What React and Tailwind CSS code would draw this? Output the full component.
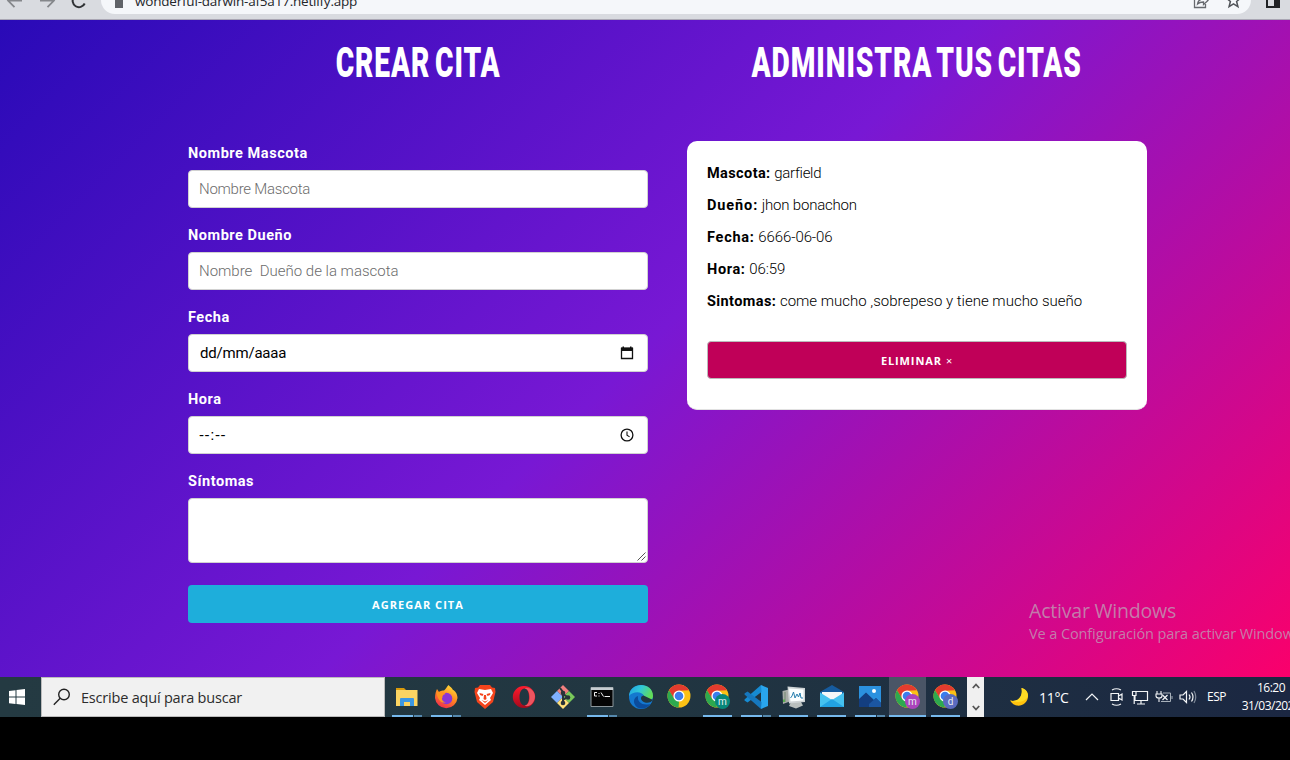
import React from 'react';

const BODY = "font-['Roboto','Liberation_Sans',sans-serif]";

function BrowserBar() {
  return (
    <header className="flex h-5 shrink-0 items-end overflow-hidden border-b border-[#a9a6b4] bg-[#d9dbe0]">
      <div className="mb-[5px] flex h-7 w-full shrink-0 items-center">
        <svg width="101" height="28" viewBox="0 0 101 28" fill="none" className="shrink-0">
          <g stroke="#85878b" strokeWidth="1.8">
            <path d="M8 14.600H22M14.500 8L8 14.600L14.500 21.200" />
            <path d="M40 14.600H54M47.500 8L54 14.600L47.500 21.200" />
          </g>
          <path d="M84.700 17.500A6.300 6.300 0 1 1 83.500 10.500" stroke="#303235" strokeWidth="2" />
        </svg>
        <div className="flex h-7 w-[1150px] items-center rounded-full bg-[#f5f7fa] pl-3.5 pr-[9px]">
          <div className="mt-1 h-3 w-2 bg-[#606368]" />
          <span className="ml-3 mt-0.5 flex-1 whitespace-nowrap font-['Open_Sans',sans-serif] text-[13.500px] leading-5 tracking-[-0.2px] text-[#24262a]">
            wonderful-darwin-af5a17.netlify.app
          </span>
          <svg width="16" height="18" viewBox="0 0 16 18" fill="none" stroke="#66696e" strokeWidth="1.300" className="mr-4">
            <path d="M5 4H1.500V16.500H12.500V13M4.500 13C5 9 8 8 10.500 8V5L15 9.500L10.500 13.500V11C8 11 6 11.500 4.500 13Z" />
          </svg>
          <svg width="17" height="18" viewBox="0 0 17 18" fill="none" stroke="#505358" strokeWidth="1.500">
            <path d="M8.500 2L10.400 6.800L15.500 7.200L11.600 10.500L12.900 15.600L8.500 12.900L4.100 15.600L5.400 10.500L1.500 7.200L6.600 6.800Z" />
          </svg>
        </div>
        <svg width="16" height="28" viewBox="0 0 16 28" className="ml-[14px] shrink-0">
          <path d="M2 9H14V21H2Z" fill="none" stroke="#202124" strokeWidth="2" />
          <path d="M9 8H15V22H9Z" fill="#202124" />
        </svg>
      </div>
    </header>
  );
}

function Title({ children }) {
  return (
    <h1 className="flex h-[84px] items-center justify-center pt-0.5">
      <span className="scale-x-[0.67] whitespace-nowrap font-['Roboto',sans-serif] text-[42px] font-black leading-none tracking-[1.4px] [word-spacing:-5px] text-white">
        {children}
      </span>
    </h1>
  );
}

const box = 'flex h-[38px] w-full items-center rounded-[4px] border border-[#d1d1d1] bg-white px-2.5 text-[15px]';

function Field({ label, children }) {
  return (
    <div>
      <div className="mb-1 h-6 text-[14.500px] font-bold leading-6 tracking-[0.55px] text-white">{label}</div>
      {children}
    </div>
  );
}

function CreateForm() {
  return (
    <section className="w-[460px]">
      <Title>CREAR CITA</Title>
      <div className={'mt-[38px] flex flex-col gap-4 ' + BODY}>
        <Field label="Nombre Mascota">
          <div className={box + ' font-light tracking-[-0.25px] text-[#6c6c6c]'}>Nombre Mascota</div>
        </Field>
        <Field label="Nombre Dueño">
          <div className={box + ' whitespace-pre font-light text-[#6c6c6c]'}>{'Nombre  Dueño de la mascota'}</div>
        </Field>
        <Field label="Fecha">
          <div className={box + ' justify-between text-black'}>
            <span className="pl-px tracking-[-0.2px]">dd/mm/aaaa</span>
            <svg width="14" height="14" viewBox="0 0 14 14" className="mr-[3px]">
              <path d="M1.500 2.500H12.500V12.500H1.500Z" fill="none" stroke="#111" strokeWidth="1.300" />
              <path d="M1 1.500H13V5H1ZM2.500 0.500H4V2H2.500ZM10 0.500H11.500V2H10Z" fill="#111" />
            </svg>
          </div>
        </Field>
        <Field label="Hora">
          <div className={box + ' justify-between text-black'}>
            <span className="font-['Liberation_Sans',sans-serif] tracking-[0.6px]">--:--</span>
            <svg width="14" height="14" viewBox="0 0 14 14" fill="none" stroke="#111" className="mr-[3px]">
              <circle cx="7" cy="7" r="5.900" strokeWidth="1.300" />
              <path d="M7 3.500V7.300L9.600 8.900" strokeWidth="1.100" />
            </svg>
          </div>
        </Field>
        <Field label="Síntomas">
          <div className="flex h-[65px] w-full items-end justify-end rounded-[4px] border border-[#d1d1d1] bg-white">
            <svg width="10" height="10" viewBox="0 0 10 10" stroke="#555" strokeWidth="1">
              <path d="M0.500 8.500L8.500 0.500M4.500 8.500L8.500 4.500" />
            </svg>
          </div>
        </Field>
        <div className="mt-1.5 flex h-[38px] items-center justify-center rounded-[4px] bg-[#1eaedb] pt-0.5 font-['Open_Sans',sans-serif] text-[11px] font-bold tracking-[1.05px] text-white">
          AGREGAR CITA
        </div>
      </div>
    </section>
  );
}

const details = [
  ['Mascota:', 'garfield', 'tracking-[0.4px]', 'tracking-[-0.3px]'],
  ['Dueño:', 'jhon bonachon', 'tracking-[0.9px]', 'tracking-[-0.2px]'],
  ['Fecha:', '6666-06-06', 'tracking-[0.75px]', 'tracking-[-0.1px]'],
  ['Hora:', '06:59', 'tracking-[0.65px]', 'tracking-[-0.1px]'],
  ['Sintomas:', 'come mucho ,sobrepeso y tiene mucho sueño', 'tracking-[0.4px]', 'tracking-[0px]'],
];

function Appointments() {
  return (
    <section className="w-[460px]">
      <Title>ADMINISTRA TUS CITAS</Title>
      <div className={'mt-[37px] h-[269px] rounded-[10px] border-b border-[#e1e1e1] bg-white px-5 pt-4 ' + BODY}>
        {details.map(([k, v, keyTracking, valueTracking]) => (
          <p key={k} className="h-8 whitespace-nowrap text-[15px] font-light leading-8 text-black">
            <span className={'text-[14.500px] font-bold ' + keyTracking}>{k}</span>{' '}
            <span className={valueTracking}>{v}</span>
          </p>
        ))}
        <div className="mt-6 flex h-[38px] items-center justify-center rounded-[4px] border border-[#bbb] bg-[#c00058] pt-0.5 font-['Open_Sans',sans-serif] text-[11px] font-bold tracking-[0.9px] text-white">
          ELIMINAR <span className="ml-1 font-normal">×</span>
        </div>
      </div>
    </section>
  );
}

function Chrome({ badge, letter }) {
  return (
    <svg width="28" height="28" viewBox="0 0 28 28">
      <circle cx="13" cy="13" r="11.500" fill="#fbc116" />
      <path d="M3 7.200A11.500 11.500 0 0 1 23 7.300L13 7.800L8 15.800Z" fill="#e33b2e" />
      <path d="M3 7.200L8.200 15.800L13 18.500L12.600 24.500A11.500 11.500 0 0 1 3 7.200Z" fill="#2da94f" />
      <circle cx="13" cy="13" r="5.600" fill="#fff" />
      <circle cx="13" cy="13" r="4.300" fill="#3b7ded" />
      {letter && <circle cx="18.500" cy="18.500" r="7.500" fill={badge} />}
      {letter && (
        <text x="18.500" y="22" textAnchor="middle" fontSize="10" fontFamily="Roboto, sans-serif" fill="#e8eef0">
          {letter}
        </text>
      )}
    </svg>
  );
}

const svgProps = { width: 26, height: 26, viewBox: '0 0 26 26' };

const Explorer = () => (
  <svg {...svgProps}>
    <path d="M2 4H10L12 6H2Z" fill="#d99a0b" />
    <path d="M2 6H23.500V22H2Z" fill="#fbd462" />
    <path d="M6 22V15Q6 14 7 14H19Q20 14 20 15V22H16V18H10V22Z" fill="#3c97e2" />
  </svg>
);

const Firefox = () => (
  <svg {...svgProps}>
    <defs>
      <linearGradient id="fx" x1="0.8" y1="0" x2="0.300" y2="1">
        <stop offset="0" stopColor="#ffe23b" />
        <stop offset="0.500" stopColor="#ff8a20" />
        <stop offset="1" stopColor="#f0294f" />
      </linearGradient>
    </defs>
    <path d="M15.500 1C17 3 19 3.500 20 6C22 6.500 24.500 10 24.500 14A11.300 11.300 0 0 1 2 14C2 10 3 7 4 5L6 8Q8 6 11 6.500C13 5 13.500 3 15.500 1Z" fill="url(#fx)" />
    <circle cx="13.500" cy="14.500" r="5.800" fill="#8b35d4" />
    <path d="M3.500 8.500C7 7 11 8 12.500 10C10 10.500 9 12 9.500 13.500C8 15 10 18.500 13 18C8 20.500 4.500 15 3.500 8.500Z" fill="#ff9420" />
  </svg>
);

const Brave = () => (
  <svg {...svgProps}>
    <path d="M8 1H18L20 3.500L23 4L23.500 8L21 18L13 25L5 18L2.500 8L3 4L6 3.500Z" fill="#f4441c" />
    <path d="M7 5L13 6L19 5L21 9L18 14L19 16L13 21L7 16L8 14L5 9Z" fill="#fff" />
    <path d="M7.500 9L11.500 10L10.500 12L8 11ZM18.500 9L14.500 10L15.500 12L18 11ZM12 11H14L14.500 15L13 16L11.500 15ZM9.500 16L13 17.500L16.500 16L13 19Z" fill="#f4441c" />
  </svg>
);

const Opera = () => (
  <svg {...svgProps}>
    <defs>
      <linearGradient id="op" x1="0" y1="0" x2="0" y2="1">
        <stop offset="0" stopColor="#ff1b2d" />
        <stop offset="1" stopColor="#a5091c" />
      </linearGradient>
    </defs>
    <path fillRule="evenodd" d="M13 2A11.200 11 0 1 0 13 24A11.200 11 0 1 0 13 2ZM13.500 4.500C16.500 4.500 18 8.500 18 13S16.500 21.500 13.500 21.500S8.500 17.500 8.500 13S10.500 4.500 13.500 4.500Z" fill="url(#op)" />
    <path d="M13.500 4.500C16 2.500 23 5 24 12C24 20 17 24 13.500 21.500C17 21.500 18.500 17 18.500 13S17 4.500 13.500 4.500Z" fill="#ee5560" />
  </svg>
);

const Git = () => (
  <svg {...svgProps}>
    <path d="M13 1L19 7L13 13L7 7Z" fill="#f07f7f" />
    <path d="M7 7L13 13L7 19L1 13Z" fill="#7fb0ff" />
    <path d="M19 7L25 13L19 19L13 13Z" fill="#79c95a" />
    <path d="M13 13L19 19L13 25L7 19Z" fill="#ffe07a" />
    <path d="M10 4L13 8V19M13 10L18 13.500M13 16L17 13" stroke="#29333a" strokeWidth="2" fill="none" />
    <circle cx="13" cy="9" r="2.300" fill="#29333a" />
    <circle cx="18" cy="13.500" r="2.300" fill="#29333a" />
    <circle cx="13" cy="19" r="2.300" fill="#29333a" />
  </svg>
);

const Cmd = () => (
  <svg {...svgProps}>
    <path d="M2 3.500H24V22.500H2Z" fill="#050505" stroke="#8d979c" />
    <path d="M2 3.500H24V6H2Z" fill="#c6cdd1" />
    <path d="M8 8.500H5.500V12H8M10 9V10M10 11.500V12.500M12 8.500L14.500 12.500M15.500 12.500H21" stroke="#f1f1f1" fill="none" />
  </svg>
);

const Edge = () => (
  <svg {...svgProps}>
    <defs>
      <linearGradient id="ed" x1="0" y1="0" x2="1" y2="0.400">
        <stop offset="0" stopColor="#1f9de6" />
        <stop offset="0.500" stopColor="#31c8d6" />
        <stop offset="1" stopColor="#62dc57" />
      </linearGradient>
    </defs>
    <circle cx="13" cy="13" r="12" fill="#1478cf" />
    <path d="M1 12C2 -3 25 -2 25 12C25 16 21 18 17 17C14.500 16 16.500 14.500 16 12C14 7 5 7 1 12Z" fill="url(#ed)" />
    <path d="M10 12C9 18 14 22 22.500 20C18 26 9 26 6.500 20C5 16 7 13 10 12Z" fill="#0b4c9c" />
    <path d="M15.500 11.500C12 12 12 17 17 18.500C20 19.500 24 18 25 15.500C25 18 24 19.500 22.500 21L25 21.500V16Z" fill="#22373f" />
  </svg>
);

const Code = () => (
  <svg {...svgProps}>
    <path d="M18 1L25 4V22L18 25Z" fill="#29a5ed" />
    <path d="M18 1L18.500 8L4.500 18.500L1.500 16.500V15.500Z" fill="#168bd2" />
    <path d="M18 25L18.500 18L4.500 7.500L1.500 9.500V10.500Z" fill="#1677bd" />
  </svg>
);

const Monitor = () => (
  <svg {...svgProps}>
    <path d="M1.500 7L10 5V17L2 20Z" fill="#a9aca8" />
    <path d="M3 8H5V18H3Z" fill="#8d9a8c" />
    <path d="M2 15.500H4V18H2Z" fill="#59ad50" />
    <path d="M10 18H20L22 21.500L15 24.500L8 22Z" fill="#b9bfbe" />
    <path d="M6.500 2.500L24 4V18L8 19.500Z" fill="#cfd4d6" />
    <path d="M8 4.500L22.500 5.500V16.500L9.500 17.500Z" fill="#fbffff" />
    <path d="M9.500 14L11 12L12.500 8L14 14L16 10L17.500 13L19 9L20 14H22" fill="none" stroke="#287fae" strokeWidth="1" />
  </svg>
);

const Mail = () => (
  <svg {...svgProps}>
    <path d="M1 8L13 1L25 8V13H1Z" fill="#165b9e" />
    <path d="M3 8H23V16L13 20L3 16Z" fill="#f5f7f9" />
    <path d="M1 8.500L13 16L25 8.500V23H1Z" fill="#45c1ef" />
    <path d="M1 23L13 15L25 23Z" fill="#22a2e2" />
  </svg>
);

const Photos = () => (
  <svg {...svgProps}>
    <path d="M2 2H24V23H2Z" fill="#2b91df" />
    <path d="M2 15L9 8.500L17 16L19 14L24 19V23H2Z" fill="#133e80" />
    <path d="M12 20L19 14L24 19V23H12Z" fill="#1b56a2" />
    <circle cx="17" cy="7" r="2" fill="#fff" />
  </svg>
);

const apps = [
  { icon: <Explorer />, bar: 'stack' },
  { icon: <Firefox />, bar: 'stack' },
  { icon: <Brave /> },
  { icon: <Opera /> },
  { icon: <Git /> },
  { icon: <Cmd />, bar: 'stack' },
  { icon: <Edge /> },
  { icon: <Chrome /> },
  { icon: <Chrome badge="#07877a" letter="m" />, bar: 'one' },
  { icon: <Code />, bar: 'stack' },
  { icon: <Monitor />, bar: 'one' },
  { icon: <Mail />, bar: 'one' },
  { icon: <Photos />, bar: 'stack' },
  { icon: <Chrome badge="#ab44bc" letter="m" />, bar: 'active' },
  { icon: <Chrome badge="#5b6bc0" letter="d" />, bar: 'one' },
];

function AppButton({ icon, bar, wide }) {
  return (
    <div className={'flex h-10 flex-col items-center ' + (wide ? 'w-[39px]' : 'w-[38px]')}>
      <div className={'flex h-[38px] items-center justify-center pt-0.5 ' + (bar === 'active' ? 'w-[37px] bg-[#4a5566]' : 'w-[30px]')}>
        {icon}
      </div>
      {bar === 'stack' && (
        <div className="flex h-0.5 w-[30px] gap-px">
          <div className="w-[21px] bg-[#76b9ed]" />
          <div className="w-2 bg-[#5588ad]" />
        </div>
      )}
      {bar === 'one' && <div className="h-0.5 w-[29px] bg-[#76b9ed]" />}
      {bar === 'active' && <div className="h-0.5 w-[37px] bg-[#76b9ed]" />}
    </div>
  );
}

function Taskbar() {
  return (
    <footer className="flex h-10 shrink-0 overflow-hidden bg-linear-to-r from-[#243a42] via-[#213641] to-[#1b2742] font-['Open_Sans','Noto_Sans',sans-serif]">
      <div className="flex w-[41px] shrink-0 items-center pl-[9px]">
        <svg width="16" height="16" viewBox="0 0 16 16" fill="#fff">
          <path d="M0 2L6.500 1.200V7.500H0ZM7.500 1L16 0V7.500H7.500ZM0 8.500H6.500V15L0 14.200ZM7.500 8.500H16V16L7.500 15.100Z" />
        </svg>
      </div>
      <div className="flex w-[344px] shrink-0 items-center border border-[#bcbcbc] bg-[#f1f1f1] pl-[11px]">
        <svg width="18" height="18" viewBox="0 0 18 18" fill="none" stroke="#222" strokeWidth="1.400">
          <circle cx="11" cy="6.500" r="5.300" />
          <path d="M7.200 10.300L0.800 16.700" />
        </svg>
        <span className="ml-[10px] mt-0.5 whitespace-nowrap text-[14.500px] tracking-[-0.2px] text-[#2c2c2c]">Escribe aquí para buscar</span>
      </div>
      <div className="flex w-[582px] shrink-0 pl-[2.500px]">
        {apps.map((a, i) => (
          <AppButton key={i} icon={a.icon} bar={a.bar} wide={i < 7} />
        ))}
      </div>
      <div className="flex w-[17px] shrink-0 flex-col items-center justify-between bg-[#f0f0f0] py-[6px]">
        <svg width="8" height="6" viewBox="0 0 8 6" fill="none" stroke="#555" strokeWidth="1.800"><path d="M0.800 5L4 1.500L7.200 5" /></svg>
        <svg width="8" height="6" viewBox="0 0 8 6" fill="none" stroke="#555" strokeWidth="1.800"><path d="M0.800 1L4 4.500L7.200 1" /></svg>
      </div>
      <div className="flex flex-1 items-center whitespace-nowrap text-white">
        <svg width="20" height="20" viewBox="0 0 20 20" className="ml-[25px] shrink-0">
          <path d="M12.500 1C20 3 21 11 16 16C11 20.500 4 19 1 13.500C7 15.500 14.500 11 12.500 1Z" fill="#ffc20e" />
          <path d="M12.500 1C20 3 20 10 17 12C14 15 8 16 1 13.500C7 15.500 14.500 11 12.500 1Z" fill="#ffdc25" />
        </svg>
        <span className="ml-[10px] mt-0.5 w-[30px] text-[14px] leading-10 tracking-[-0.3px]">11°C</span>
        <svg width="116" height="20" viewBox="0 0 116 20" fill="none" stroke="#f3f5f7" strokeWidth="1.200" className="ml-[12px] shrink-0">
          <path d="M5 13L11 7L17 13" />
          <path d="M31 3Q35.500 0.500 40 3M31 17Q35.500 19.500 40 17M30 6.500H37.500V13.500H30ZM37.500 9L41 7V13L37.500 11" strokeWidth="1.200" />
          <path d="M55 4.500H66.500V13.500H54V9M60 14V17M56 17H64M51.500 4.500H55V8.500H51.500ZM53.200 8V17" strokeWidth="1.200" />
          <path d="M76 4V7M80 4V7M75 7H81V9Q81 11 78 11Q75 11 75 9ZM78 11V15" strokeWidth="1.100" />
          <path d="M82 6H89.500V14.500H80M91 9V12" stroke="#a7b0ba" strokeWidth="1" />
          <path d="M81.500 8L86.500 13M86.500 8L81.500 13" strokeWidth="1.200" />
          <path d="M99 8H102L105.500 4.500V15.500L102 12H99ZM108 7.500Q110 10 108 12.500M110.500 5.500Q113.500 10 110.500 14.500" strokeWidth="1.200" />
          <path d="M113 4Q116.500 10 113 16" stroke="#7e8998" />
        </svg>
        <span className="ml-[10px] w-[20px] text-[12px] leading-10 tracking-[-0.5px]">ESP</span>
        <div className="ml-[14px] flex w-[60px] shrink-0 flex-col items-center text-[12px] leading-[18px] tracking-[-0.5px]">
          <span>16:20</span>
          <span>31/03/2022</span>
        </div>
      </div>
    </footer>
  );
}

export default function App() {
  return (
    <div className="relative flex h-[760px] w-[1290px] flex-col overflow-hidden bg-black">
      <BrowserBar />
      <main className="flex h-[657px] shrink-0 gap-[39px] bg-[linear-gradient(135deg,#290ab7_0%,#7818d4_50%,#fa006b_100%)] pl-[188px]">
        <CreateForm />
        <Appointments />
      </main>
      <Taskbar />
      <div className="absolute left-[1029px] top-[598px] whitespace-nowrap font-['Open_Sans',sans-serif] text-[#c18caf]/90">
        <div className="text-[19.500px] leading-[26px] tracking-[-0.2px]">Activar Windows</div>
        <div className="text-[14.500px] leading-5 tracking-[-0.1px]">Ve a Configuración para activar Windows.</div>
      </div>
    </div>
  );
}
